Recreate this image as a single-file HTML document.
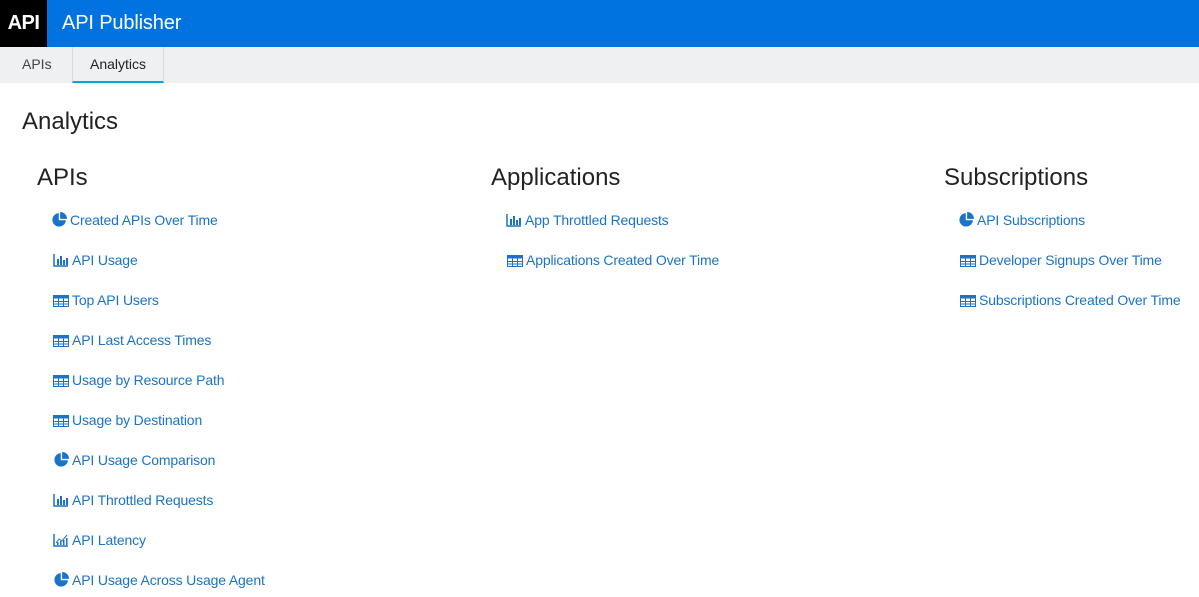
<!DOCTYPE html>
<html><head><meta charset="utf-8"><style>
body{margin:0;width:1199px;height:597px;overflow:hidden;background:#fff;font-family:"Liberation Sans",sans-serif;position:relative}
.hdr{position:absolute;left:0;top:0;width:1199px;height:47px;background:#0073e0}
.logo{position:absolute;left:0;top:0;width:47px;height:47px;background:#000;color:#fff;font-weight:bold;font-size:20px;line-height:47px;text-align:center;letter-spacing:-0.5px}
.ttl{position:absolute;left:62px;top:0;line-height:47px;color:#fff;font-size:20px;letter-spacing:-0.15px}
.tabs{position:absolute;left:0;top:47px;width:1199px;height:36px;background:#eef0f1}
.tab{position:absolute;top:0;height:36px;line-height:34px;font-size:14px;color:#444}
.tab.act{left:72px;width:92px;border-left:1px solid #d8dcde;border-right:1px solid #d8dcde;box-sizing:border-box;text-align:center;border-bottom:2px solid #0ea1e0;color:#222}
h1{position:absolute;left:22px;top:108px;margin:0;font-weight:normal;font-size:24px;color:#222}
h2{position:absolute;top:164px;margin:0;font-weight:normal;font-size:24px;color:#222}
.l{position:absolute;font-size:14px;color:#1a73c8;white-space:nowrap;line-height:16px;letter-spacing:-0.15px}
.l svg{vertical-align:-2px;margin-right:3px}
</style></head><body>
<div class="hdr"><div class="logo">API</div><div class="ttl">API Publisher</div></div>
<div class="tabs"><div class="tab" style="left:22px">APIs</div><div class="tab act">Analytics</div></div>
<h1>Analytics</h1>
<h2 style="left:37px">APIs</h2><h2 style="left:491px">Applications</h2><h2 style="left:944px">Subscriptions</h2>
<svg width="0" height="0" style="position:absolute"><defs>
<symbol id="pie" viewBox="0 0 14 14"><path d="M6.3 1A6.3 6.3 0 1 0 13 7.7H6.3z" fill="#1a73c8"/><path d="M7.6 0V6.4H14A6.4 6.4 0 0 0 7.6 0z" fill="#1a73c8"/></symbol>
<symbol id="bar" viewBox="0 0 16 14"><path d="M1 1V13H15" stroke="#1a73c8" stroke-width="1.5" fill="none"/><rect x="4" y="6" width="2" height="6" fill="#1a73c8"/><rect x="7" y="3" width="2" height="9" fill="#1a73c8"/><rect x="10" y="7" width="2" height="5" fill="#1a73c8"/><rect x="13" y="5" width="2" height="7" fill="#1a73c8"/></symbol>
<symbol id="tbl" viewBox="0 0 16 12"><rect x="0.5" y="0.5" width="15" height="11" fill="none" stroke="#1a73c8"/><rect x="0.5" y="0.5" width="15" height="3" fill="#1a73c8"/><path d="M0 6.5H16M0 9H16M5.5 0V12M10.5 0V12" stroke="#1a73c8"/></symbol>
<symbol id="line" viewBox="0 0 16 14"><path d="M1 1V13H15" stroke="#1a73c8" stroke-width="1.5" fill="none"/><path d="M3 10L6 6L9 8L14 2" stroke="#1a73c8" fill="none"/><rect x="4" y="9" width="1.5" height="3" fill="#1a73c8"/><rect x="7" y="8" width="1.5" height="4" fill="#1a73c8"/><rect x="10" y="7" width="1.5" height="5" fill="#1a73c8"/><rect x="13" y="5" width="1.5" height="7" fill="#1a73c8"/></symbol>
</defs></svg>
<div class="l" style="left:52px;top:212px"><svg width="15" height="15"><use href="#pie"/></svg>Created APIs Over Time</div>
<div class="l" style="left:53px;top:252px"><svg width="16" height="14"><use href="#bar"/></svg>API Usage</div>
<div class="l" style="left:53px;top:292px"><svg width="16" height="12"><use href="#tbl"/></svg>Top API Users</div>
<div class="l" style="left:53px;top:332px"><svg width="16" height="12"><use href="#tbl"/></svg>API Last Access Times</div>
<div class="l" style="left:53px;top:372px"><svg width="16" height="12"><use href="#tbl"/></svg>Usage by Resource Path</div>
<div class="l" style="left:53px;top:412px"><svg width="16" height="12"><use href="#tbl"/></svg>Usage by Destination</div>
<div class="l" style="left:54px;top:452px"><svg width="15" height="15"><use href="#pie"/></svg>API Usage Comparison</div>
<div class="l" style="left:53px;top:492px"><svg width="16" height="14"><use href="#bar"/></svg>API Throttled Requests</div>
<div class="l" style="left:53px;top:532px"><svg width="16" height="14"><use href="#line"/></svg>API Latency</div>
<div class="l" style="left:54px;top:572px"><svg width="15" height="15"><use href="#pie"/></svg>API Usage Across Usage Agent</div>
<div class="l" style="left:506px;top:212px"><svg width="16" height="14"><use href="#bar"/></svg>App Throttled Requests</div>
<div class="l" style="left:507px;top:252px"><svg width="16" height="12"><use href="#tbl"/></svg>Applications Created Over Time</div>
<div class="l" style="left:959px;top:212px"><svg width="15" height="15"><use href="#pie"/></svg>API Subscriptions</div>
<div class="l" style="left:960px;top:252px"><svg width="16" height="12"><use href="#tbl"/></svg>Developer Signups Over Time</div>
<div class="l" style="left:960px;top:292px"><svg width="16" height="12"><use href="#tbl"/></svg>Subscriptions Created Over Time</div>
</body></html>
